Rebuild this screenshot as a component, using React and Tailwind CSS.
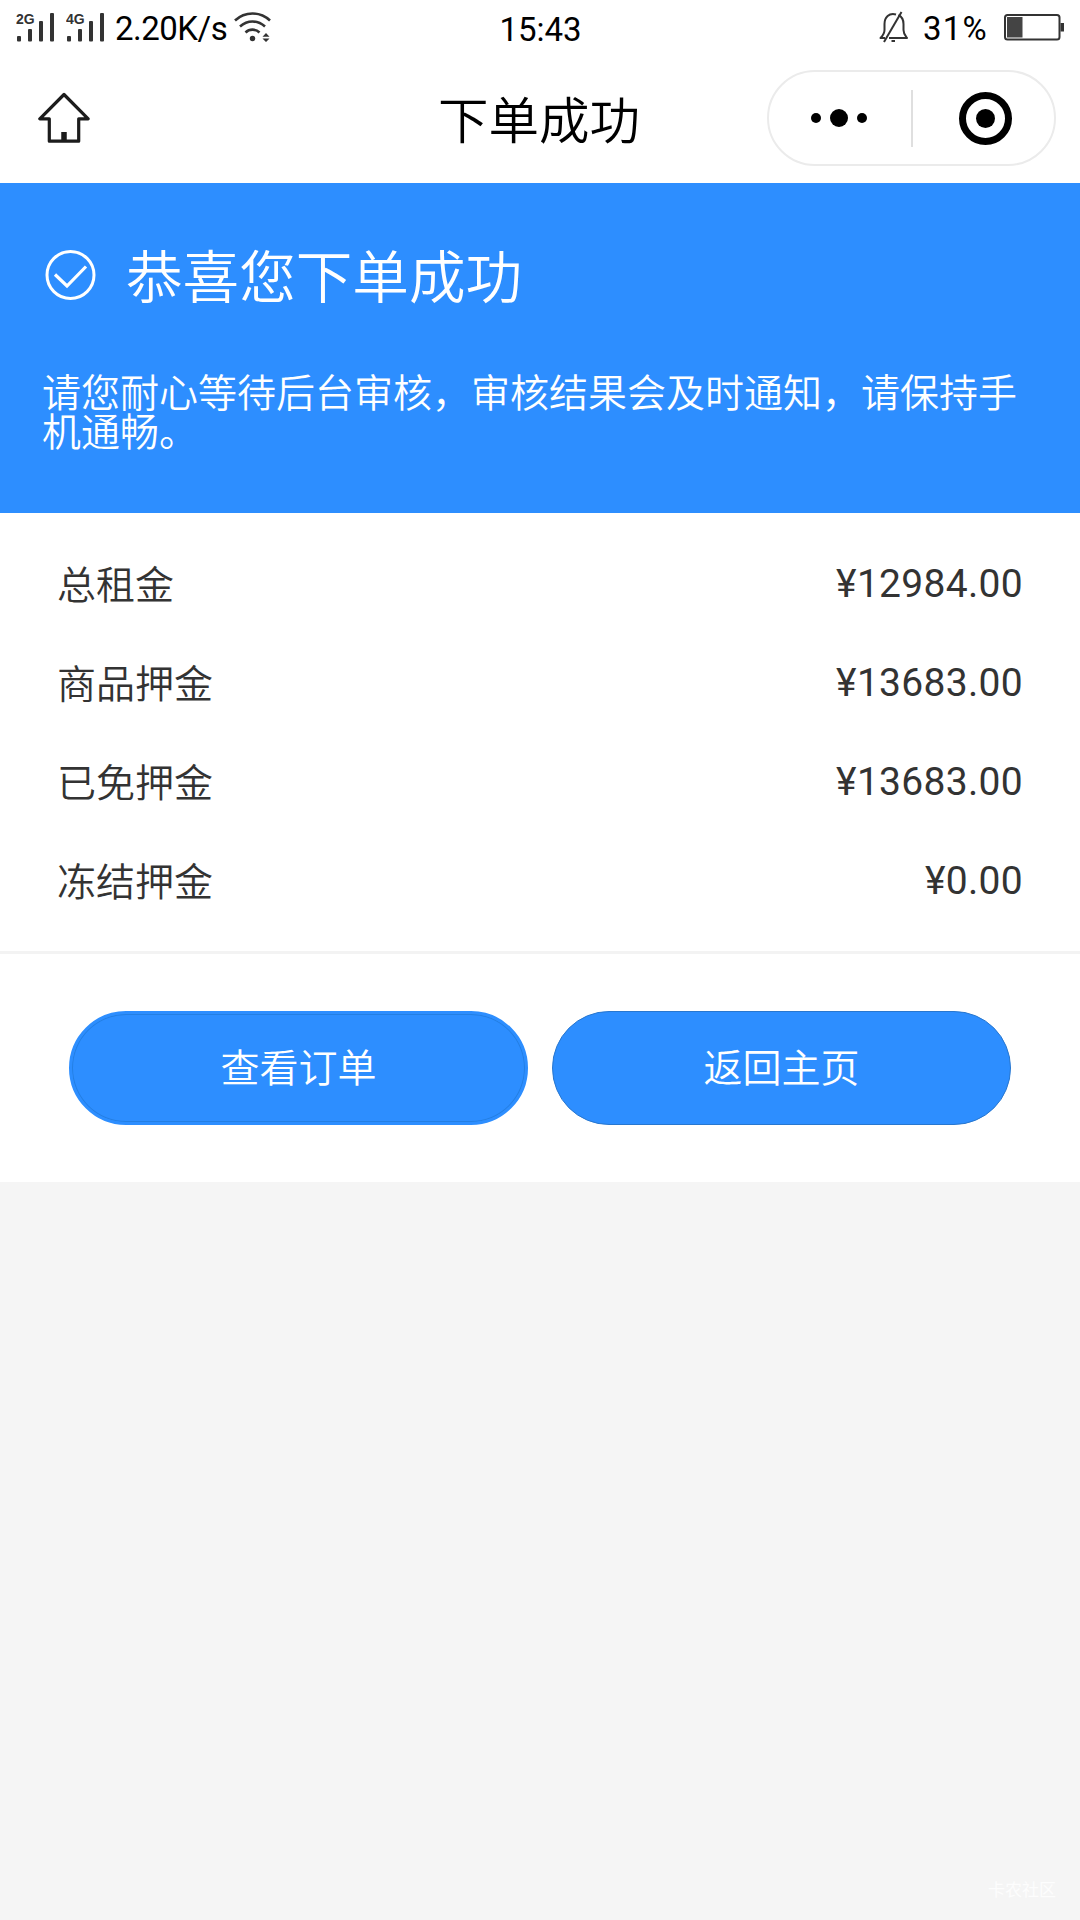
const rows = [
  { label: '总租金', value: '¥12984.00' },
  { label: '商品押金', value: '¥13683.00' },
  { label: '已免押金', value: '¥13683.00' },
  { label: '冻结押金', value: '¥0.00' },
]

function Signal({ type }) {
  return (
    <svg viewBox="0 0 40 30" className="w-10 h-[30px]" fill="#333">
      <text x="0" y="12" fontSize="14" fontWeight="700" fontFamily="Liberation Sans, sans-serif">{type}</text>
      <rect x="1" y="24" width="4" height="5.5" rx="1" />
      <rect x="12" y="17" width="4" height="12.5" rx="1" />
      <rect x="23" y="9" width="4" height="20.5" rx="1" />
      <rect x="34" y="1" width="4" height="28.5" rx="1" />
    </svg>
  )
}

function Wifi() {
  return (
    <svg viewBox="0 0 38 30" className="w-[38px] h-[30px]" fill="none" stroke="#333" strokeWidth="2.6">
      <path d="M1 8.5C11 -.8 26 -.8 36 8.5" />
      <path d="M6 14.5C13.5 7.8 23.5 7.8 31 14.5" />
      <path d="M11.5 20.5C15.5 16.7 21.5 16.7 25.5 20.5" />
      <circle cx="18.5" cy="26.5" r="2.7" fill="#333" stroke="none" />
      <path d="M28.5 24.8L32 21L35.500 24.8ZM28.5 26.5L32 30L35.5 26.5Z" fill="#333" stroke="none" />
    </svg>
  )
}

function MutedBell() {
  return (
    <svg viewBox="0 0 30 32" className="w-[30px] h-8" fill="none" stroke="#333" strokeWidth="2" strokeLinejoin="round">
      <path d="M10 27H28C25.5 24 24.500 23 24.5 19V13C24.5 8.5 22.5 5.5 19.5 4" />
      <path d="M17 3.5C10 1.5 5.5 6.5 5.5 13V19C5.5 23 4 24.5 1.5 27H6" />
      <path d="M22.5 1L5 31" />
      <path d="M12.5 30H16" />
    </svg>
  )
}

function Battery() {
  return (
    <svg viewBox="0 0 61 27" className="w-[61px] h-[27px]">
      <rect x="1" y="1" width="54.5" height="24.5" rx="2.5" fill="none" stroke="#333" strokeWidth="2" />
      <rect x="3" y="3" width="15.5" height="20.5" fill="#444" />
      <rect x="56.5" y="9" width="3.5" height="8.5" fill="#333" />
    </svg>
  )
}

function StatusBar() {
  return (
    <div className="grid grid-cols-3 items-center h-[54px] pl-4 pr-[15px] text-black text-[33px] leading-none">
      <div className="flex items-center">
        <Signal type="2G" />
        <div className="ml-[10px]"><Signal type="4G" /></div>
        <span className="ml-[9px] w-[119px] tracking-[-0.5px] whitespace-nowrap pt-0.5">2.20K/s</span>
        <Wifi />
      </div>
      <div className="text-center pt-1">15:43</div>
      <div className="flex items-center justify-end">
        <MutedBell />
        <span className="ml-[14px] mr-[16px] tracking-[1.2px] pt-0.5">31%</span>
        <Battery />
      </div>
    </div>
  )
}

function NavBar() {
  return (
    <div className="grid grid-cols-3 items-center h-[129px] pb-[1px] pl-[38px] pr-6">
      <svg viewBox="0 0 52 52" className="w-[52px] h-[52px]" fill="none" stroke="#1c1c1c" strokeWidth="3.2" strokeLinejoin="round">
        <path d="M26 2.5L1.8 26.8H11.3V49.2H40.7V26.8H50.2Z" />
        <path d="M26 40V49" strokeWidth="5.5" />
      </svg>
      <h1 className="pt-[9px] pr-4 text-center text-[50.5px] leading-none font-[350] text-black whitespace-nowrap">下单成功</h1>
      <div className="justify-self-end flex items-center w-[289px] h-24 rounded-full border-2 border-[#ebebeb]">
        <div className="w-[142px] pr-[3px] flex items-center justify-center gap-[9px]">
          <span className="size-[10px] rounded-full bg-black" />
          <span className="size-[18px] rounded-full bg-black" />
          <span className="size-[10px] rounded-full bg-black" />
        </div>
        <div className="w-0.5 h-[57px] bg-[#dfdfdf]" />
        <div className="flex-1 flex justify-center pl-1">
          <div className="size-[53px] rounded-full border-7 border-black flex items-center justify-center">
            <span className="size-[19px] rounded-full bg-black" />
          </div>
        </div>
      </div>
    </div>
  )
}

export default function App() {
  return (
    <div className="relative w-[1080px] h-[1920px] overflow-hidden bg-[#f5f5f5] font-[Roboto,'Noto_Sans_CJK_SC',sans-serif]">
      <div className="bg-white">
        <StatusBar />
        <NavBar />
      </div>

      <div className="h-[330px] bg-[#2d8eff] text-white px-[42px] pt-[63px]">
        <div className="flex items-center h-[57px]">
          <svg viewBox="0 0 56 56" className="w-14 h-14" fill="none" stroke="#fff" strokeWidth="3">
            <circle cx="28.5" cy="28" r="23.5" />
            <path d="M13 27.5L25 39L44 19.5" strokeWidth="3.2" />
          </svg>
          <h2 className="ml-7 pt-[9px] text-[56.6px] leading-none font-[350]">恭喜您下单成功</h2>
        </div>
        <p className="mt-[72px] text-[39px] leading-[39px] font-[350]">
          请您耐心等待后台审核，审核结果会及时通知，请保持手机通畅。
        </p>
      </div>

      <div className="bg-white pt-[21px] pb-[21px] px-[57px] text-[39px] text-[#333] border-b-3 border-[#f3f3f3]">
        {rows.map(r => (
          <div key={r.label} className="flex items-center justify-between h-[99px] leading-none">
            <span className="font-[350] pt-[6px]">{r.label}</span>
            <span className="pt-0.5 tracking-[0.3px]">{r.value}</span>
          </div>
        ))}
      </div>

      <div className="bg-white h-[228px] px-[69px] pt-[57px] flex gap-6 text-white text-[39px] font-[350]">
        <button className="w-[459px] h-[114px] pt-[3px] rounded-full bg-[#2d8eff] border-3 border-[#2d8eff] inset-ring inset-ring-[#247fe3]">查看订单</button>
        <button className="w-[459px] h-[114px] pt-[3px] rounded-full bg-[#2d8eff] border border-[#2877cf]">返回主页</button>
      </div>

      {/* watermark */}
      <span className="absolute right-6 bottom-[21px] text-[17px] leading-none text-[#fdfdfd]">卡农社区</span>
    </div>
  )
}
